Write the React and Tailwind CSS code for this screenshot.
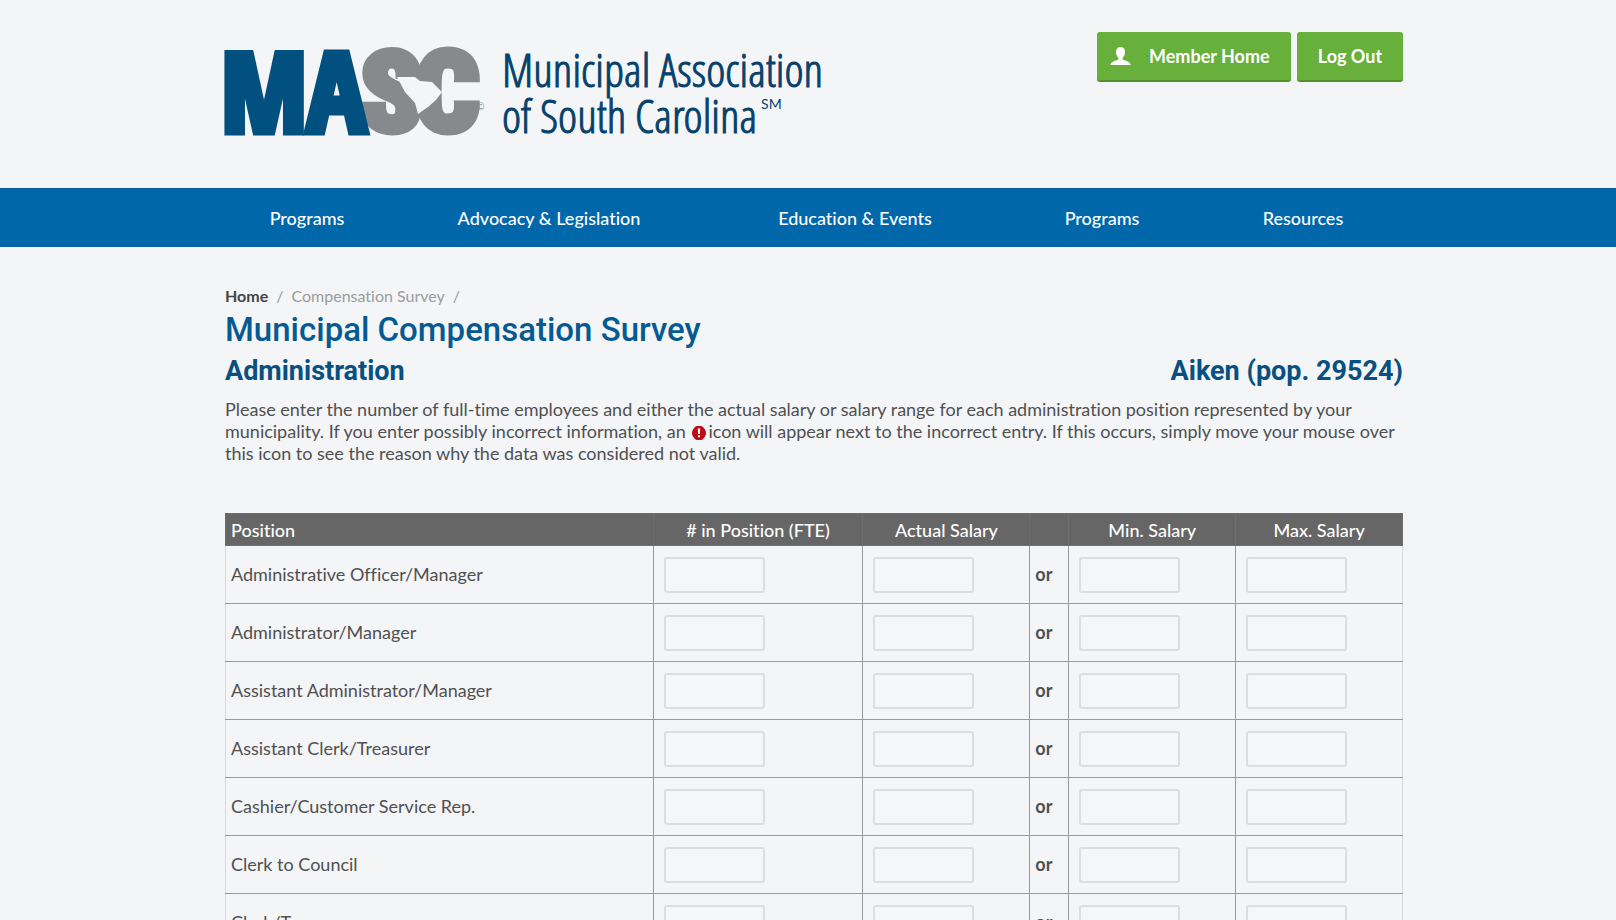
import React, { useState } from 'react';

const navItems = ['Programs', 'Advocacy & Legislation', 'Education & Events', 'Programs', 'Resources'];

const positions = [
  'Administrative Officer/Manager',
  'Administrator/Manager',
  'Assistant Administrator/Manager',
  'Assistant Clerk/Treasurer',
  'Cashier/Customer Service Rep.',
  'Clerk to Council',
  'Clerk/Treasurer',
];

const Logo = () => (
  <a href="#" className="flex items-start gap-4">
    <svg width="261" height="92" viewBox="0 0 261 92" className="overflow-visible">
      <text
        x="135 190"
        y="85"
        fontSize="112"
        fill="#868a8d"
        stroke="#868a8d"
        strokeWidth="7"
        className="font-['Roboto_Condensed',sans-serif] font-black"
      >
        SC
      </text>
      <text
        x="-4"
        y="86"
        fontSize="110"
        fill="#02507f"
        stroke="#02507f"
        strokeWidth="7"
        className="font-['Open_Sans_Condensed','Roboto_Condensed',sans-serif] font-bold"
      >
        MA
      </text>
      {/* state outline between the S and the C */}
      <path d="M172 31 L190 31 L195 35 L207 36 L217 46 L211 54 L203 61 L193 68 L190 57 L180 46 Z" fill="#f4f5f7" />
      <text x="252" y="64" fontSize="9" fill="#868a8d">©</text>
    </svg>
    <p className="font-['Open_Sans_Condensed_Light','Roboto_Condensed',sans-serif] text-[46px] leading-[46px] font-light whitespace-nowrap text-[#06416b] [-webkit-text-stroke:1px_#06416b]">
      Municipal Association
      <br />
      of South Carolina
      <sup className="top-[-24px] ml-1 font-[Lato,sans-serif] text-[14px] leading-none font-normal [-webkit-text-stroke:0]">SM</sup>
    </p>
  </a>
);

const ErrorIcon = () => (
  <svg width="14" height="14" viewBox="0 0 14 14" className="mx-[2px] inline-block align-[-2px]">
    <path d="M5 0h4q1 0 2 1l2 2.500q1 1.500 1 3.500t-1 3.500L11 13q-1 1-2 1H5q-1 0-2-1L1 10.500Q0 9 0 7t1-3.500L3 1q1-1 2-1z" fill="#c00a14" />
    <path d="M5.800 2.500h2.400L7.900 8H6.100zM6 9.300h2v2H6z" fill="#fff" />
  </svg>
);

const SalaryInput = ({ label, value, onChange }) => (
  <input
    type="text"
    aria-label={label}
    value={value}
    onChange={onChange}
    className="block h-9 w-[101px] rounded-[3px] border-2 border-[#dcdddf] bg-[#f5f6f8] px-2 text-[18px] text-[#4a4a4a]"
  />
);

const App = () => {
  const [values, setValues] = useState({});

  const field = (position, name) => (
    <td className="border border-[#999a9c] pl-[10px] last:border-r-[#d8d9db]">
      <SalaryInput
        label={`${position} ${name}`}
        value={values[`${position}-${name}`] || ''}
        onChange={(e) => setValues({ ...values, [`${position}-${name}`]: e.target.value })}
      />
    </td>
  );

  return (
    <div className="min-h-screen bg-[#f4f5f7] font-[Lato,sans-serif] text-[#4f5052] [font-variant-ligatures:none]">
      <header className="pl-3">
        <div className="mx-auto flex h-[188px] max-w-[1178px] items-start justify-between">
          <div className="pt-[46px]">
            <Logo />
          </div>
          <div className="flex gap-[6px] pt-8 text-[18px] font-bold text-white">
            <button type="button" className="flex h-[50px] w-[194px] items-center gap-[18px] rounded-[3px] border-b-2 border-[#538f31] bg-[#68b03c] pl-[13px]">
              <svg width="21" height="20" viewBox="0 0 21 20" fill="currentColor">
                <path d="M10.500 1c3 0 4.500 2 4.500 5 0 2.600-1 4.600-2.300 5.600v2.200c2.600.9 7 1.700 7.800 4.700V19H.5v-.5c.8-3 5.200-3.800 7.800-4.700v-2.200C7 10.600 6 8.600 6 6c0-3 1.500-5 4.500-5z" />
              </svg>
              Member Home
            </button>
            <button type="button" className="h-[50px] w-[106px] rounded-[3px] border-b-2 border-[#538f31] bg-[#68b03c]">
              Log Out
            </button>
          </div>
        </div>
      </header>

      <nav className="border-y border-[#0b5f99] bg-[#0067ab] pl-3">
        <ul className="mx-auto grid h-[57px] max-w-[1178px] grid-cols-[164fr_320fr_292fr_202fr_200fr] items-center pt-[2px] text-center text-[18px] font-medium text-white">
          {navItems.map((item, i) => (
            <li key={i}>
              <a href="#">{item}</a>
            </li>
          ))}
        </ul>
      </nav>

      <main className="pl-3">
        <div className="mx-auto max-w-[1178px] pt-[37px]">
          <div className="flex gap-2 text-[16px] leading-6 text-[#9b9c9e]">
            <a href="#" className="font-bold text-[#434446]">Home</a>
            <span>/</span>
            <a href="#">Compensation Survey</a>
            <span>/</span>
          </div>

          <h1 className="font-[Roboto,sans-serif] text-[33px] leading-[44px] font-medium text-[#065a92]">
            Municipal Compensation Survey
          </h1>
          <div className="flex justify-between font-[Roboto,sans-serif] text-[27px] leading-[38px] font-bold text-[#07507f]">
            <h2>Administration</h2>
            <h2>Aiken (pop. 29524)</h2>
          </div>

          <p className="mt-2 text-[18px] leading-[22px]">
            Please enter the number of full-time employees and either the actual salary or salary range for each administration position represented by your municipality. If you enter possibly incorrect information, an <ErrorIcon />icon will appear next to the incorrect entry. If this occurs, simply move your mouse over this icon to see the reason why the data was considered not valid.
          </p>

          <table className="mt-[49px] w-full table-fixed border-collapse border border-[#d8d9db] text-[18px]">
            <colgroup>
              <col className="w-[36.33%]" />
              <col className="w-[17.83%]" />
              <col className="w-[14.18%]" />
              <col className="w-[3.31%]" />
              <col className="w-[14.18%]" />
              <col className="w-[14.17%]" />
            </colgroup>
            <thead>
              <tr className="h-8 bg-[#666] text-white">
                <th scope="col" className="border border-[#6e6e6e] pt-[2px] pl-[5px] text-left font-medium">Position</th>
                <th scope="col" className="border border-[#6e6e6e] pt-[2px] font-medium"># in Position (FTE)</th>
                <th scope="col" className="border border-[#6e6e6e] pt-[2px] font-medium">Actual Salary</th>
                <td className="border border-[#6e6e6e]"></td>
                <th scope="col" className="border border-[#6e6e6e] pt-[2px] font-medium">Min. Salary</th>
                <th scope="col" className="border border-[#6e6e6e] pt-[2px] font-medium">Max. Salary</th>
              </tr>
            </thead>
            <tbody>
              {positions.map((position) => (
                <tr key={position} className="h-[58px]">
                  <th scope="row" className="border border-[#999a9c] border-l-[#d8d9db] pl-[5px] text-left font-normal">
                    {position}
                  </th>
                  {field(position, '# in Position (FTE)')}
                  {field(position, 'Actual Salary')}
                  <td className="border border-[#999a9c] pl-[5px] font-bold">or</td>
                  {field(position, 'Min. Salary')}
                  {field(position, 'Max. Salary')}
                </tr>
              ))}
            </tbody>
          </table>
        </div>
      </main>
    </div>
  );
};

export default App;
